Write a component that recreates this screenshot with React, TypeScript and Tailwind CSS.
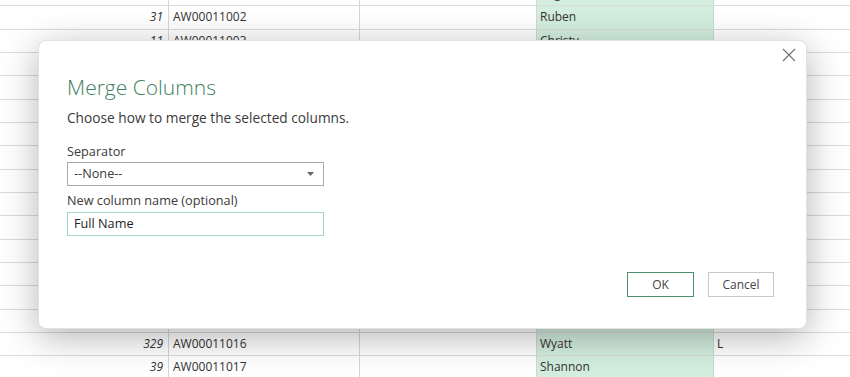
import React from "react";

// rows 3..14 sit under the dialog, so their cells are left blank
const rows: [string, string, string, string, string][] = [
  ["", "", "", "Eugene", ""],
  ["31", "AW00011002", "", "Ruben", ""],
  ["11", "AW00011003", "", "Christy", ""],
  ["", "", "", "", ""],
  ["", "", "", "", ""],
  ["", "", "", "", ""],
  ["", "", "", "", ""],
  ["", "", "", "", ""],
  ["", "", "", "", ""],
  ["", "", "", "", ""],
  ["", "", "", "", ""],
  ["", "", "", "", ""],
  ["", "", "", "", ""],
  ["", "", "", "", ""],
  ["", "", "", "", ""],
  ["329", "AW00011016", "", "Wyatt", "L"],
  ["39", "AW00011017", "", "Shannon", ""],
];

const Sheet = () => (
  <div className="-mt-[17px] flex flex-col text-[12px] text-[#333]">
    {rows.map(([n, id, title, first, middle], i) => (
      <div key={i} className="flex h-[23.33px] border-b border-[#dadada]">
        <div className="w-[169px] shrink-0 border-r border-[#d6d6d6] pr-[5px] flex items-center justify-end italic">
          {n}
        </div>
        <div className="w-[191px] shrink-0 border-r border-[#d6d6d6] pl-[4px] flex items-center">
          {id}
        </div>
        <div className="w-[177px] shrink-0 border-r border-[#d6d6d6] pl-[4px] flex items-center">
          {title}
        </div>
        <div className="w-[177px] shrink-0 bg-[#d3eedf] border-r border-[#c4dccf] pl-[3px] flex items-center">
          {first}
        </div>
        <div className="flex-1 pl-[3px] flex items-center">{middle}</div>
      </div>
    ))}
  </div>
);

export default function App() {
  return (
    <div className="relative w-[850px] h-[377px] overflow-hidden bg-white font-['Open_Sans',sans-serif]">
      <Sheet />

      {/* Merge Columns dialog */}
      <div className="absolute left-[38px] top-[40px] w-[769px] h-[289px] rounded-[8px] bg-white border border-[#e2e2e2] shadow-[0_8px_36px_rgba(0,0,0,0.3)] px-[28px] flex flex-col">
        <button className="absolute right-[10px] top-[7px] w-[14px] h-[14px] text-[#707070]">
          <svg viewBox="0 0 14 14" className="w-[14px] h-[14px]" fill="none" stroke="currentColor" strokeWidth="1.1">
            <path d="M1 1L13 13M13 1L1 13" />
          </svg>
        </button>

        <h1 className="mt-[32px] text-[21px] leading-[28px] font-light text-[#3f805e]">
          Merge Columns
        </h1>
        <p className="mt-[7px] text-[13.7px] leading-[20px] text-[#3a3a3a]">
          Choose how to merge the selected columns.
        </p>

        <label className="mt-[13px] text-[12.7px] leading-[20px] text-[#3a3a3a]">Separator</label>
        <div className="mt-[1px] w-[257px] h-[24px] border border-[#acacac] flex items-center pl-[6px] pr-[9px] text-[12.7px] text-[#3a3a3a]">
          <span className="flex-1">--None--</span>
          <svg viewBox="0 0 7 4" className="w-[7px] h-[4px]">
            <path d="M0 0H7L3.5 4Z" fill="#666" />
          </svg>
        </div>

        <label className="mt-[4px] text-[12.7px] leading-[20px] text-[#3a3a3a]">
          New column name (optional)
        </label>
        <div className="mt-[2px] w-[257px] h-[24px] border border-[#a6d8bb] flex items-center pl-[6px] text-[12.7px] text-[#1f1f1f]">
          Full Name
        </div>

        <div className="mt-[36px] mr-[4px] flex justify-end gap-[14px]">
          <button className="w-[67px] h-[25px] border border-[#4f8f6c] text-[12px] text-[#444]">OK</button>
          <button className="w-[66px] h-[25px] border border-[#c8c8c8] text-[12px] text-[#444]">Cancel</button>
        </div>
      </div>
    </div>
  );
}
